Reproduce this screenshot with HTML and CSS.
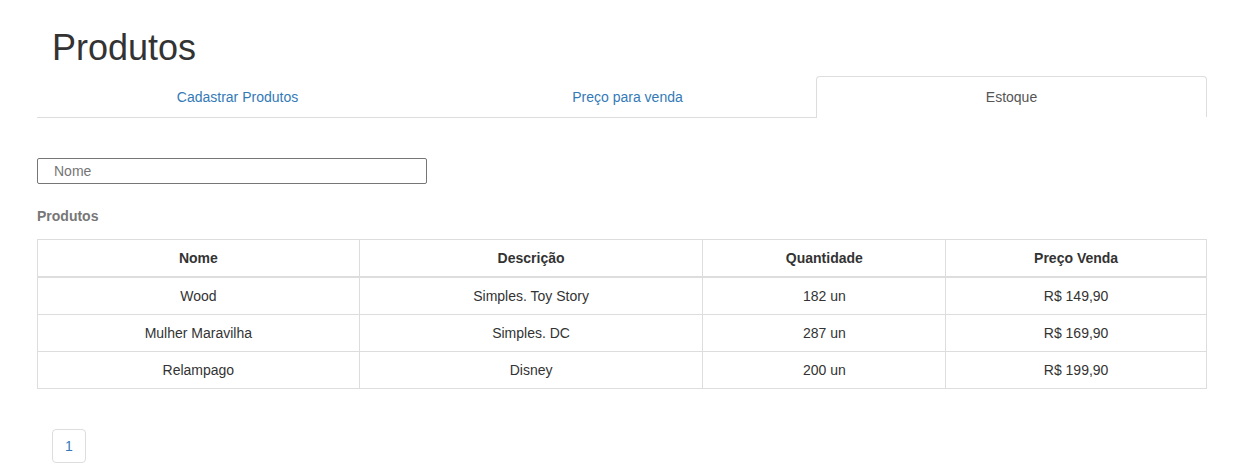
FILE: index.html
```html
<!DOCTYPE html>
<html lang="pt-BR">
<head>
<meta charset="utf-8">
<title>Produtos</title>
<link rel="stylesheet" href="styles.css">
</head>
<body>
<div class="container">
  <h1 class="title">Produtos</h1>
  <ul class="tabs">
    <li class="tab tab-1"><a href="#">Cadastrar Produtos</a></li>
    <li class="tab tab-2"><a href="#">Preço para venda</a></li>
    <li class="tab tab-3 active"><a href="#">Estoque</a></li>
  </ul>
  <div class="search">
    <input class="search-input" type="text" placeholder="Nome">
  </div>
  <div class="section-label">Produtos</div>
  <table class="grid">
    <colgroup>
      <col class="c1"><col class="c2"><col class="c3"><col class="c4">
    </colgroup>
    <thead>
      <tr><th>Nome</th><th>Descrição</th><th>Quantidade</th><th>Preço Venda</th></tr>
    </thead>
    <tbody>
      <tr><td>Wood</td><td>Simples. Toy Story</td><td>182 un</td><td>R$ 149,90</td></tr>
      <tr><td>Mulher Maravilha</td><td>Simples. DC</td><td>287 un</td><td>R$ 169,90</td></tr>
      <tr><td>Relampago</td><td>Disney</td><td>200 un</td><td>R$ 199,90</td></tr>
    </tbody>
  </table>
  <ul class="pagination">
    <li><a href="#">1</a></li>
  </ul>
</div>
</body>
</html>
```
FILE: styles.css
```css
* { box-sizing: border-box; }
html, body { margin: 0; padding: 0; background: #fff; }
body {
  font-family: "Liberation Sans", Arial, Helvetica, sans-serif;
  font-size: 14px;
  line-height: 20px;
  color: #333;
}
.container {
  width: 1170px;
  margin-left: 37px;
  padding-top: 28px;
}
.title {
  margin: 0 0 8px 0;
  padding-left: 15px;
  font-size: 36px;
  font-weight: 400;
  line-height: 40px;
  color: #333;
}
.tabs {
  display: flex;
  list-style: none;
  margin: 0;
  padding: 0;
}
.tab {
  text-align: center;
  border-bottom: 1px solid #ddd;
}
.tab-1 { flex: 0 0 401px; }
.tab-2 { flex: 0 0 379px; }
.tab-3 { flex: 0 0 390px; }
.tab a {
  display: block;
  padding: 10px 15px;
  border: 1px solid transparent;
  border-bottom: 0;
  border-radius: 4px 4px 0 0;
  color: #337ab7;
  text-decoration: none;
  line-height: 20px;
}
.tab.active { border-bottom-color: transparent; }
.tab.active a {
  color: #555;
  border-color: #ddd;
  margin-left: -1px;
  background: #fff;
}
.search {
  padding-top: 40px;
}
.search-input {
  display: block;
  width: 390px;
  height: 26px;
  border: 1px solid #767676;
  border-radius: 2px;
  padding: 0 16px;
  font-family: "Liberation Sans", Arial, sans-serif;
  font-size: 14px;
  color: #333;
  outline: none;
}
.search-input::placeholder { color: #757575; }
.section-label {
  margin-top: 22px;
  margin-bottom: 13px;
  font-weight: 700;
  color: #777;
}
.grid {
  width: 1170px;
  border-collapse: collapse;
  border: 1px solid #ddd;
}
.c1 { width: 322px; }
.c2 { width: 344px; }
.c3 { width: 243px; }
.c4 { width: 261px; }
.grid th, .grid td {
  border: 1px solid #ddd;
  padding: 8px;
  line-height: 20px;
  text-align: center;
  vertical-align: middle;
}
.grid th {
  font-weight: 700;
  border-bottom: 2px solid #ddd;
}
.pagination {
  list-style: none;
  margin: 40px 0 0 15px;
  padding: 0;
  display: flex;
}
.pagination a {
  display: block;
  padding: 6px 12px;
  border: 1px solid #ddd;
  border-radius: 4px;
  color: #337ab7;
  text-decoration: none;
  line-height: 20px;
}
```
